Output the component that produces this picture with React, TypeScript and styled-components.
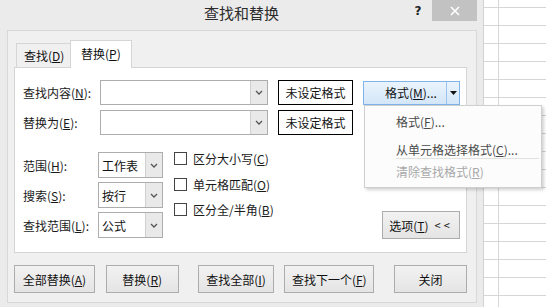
import styled, { createGlobalStyle } from "styled-components";

const GlobalStyle = createGlobalStyle`
  html, body {
    margin: 0;
    padding: 0;
  }
  body {
    font-family: "Noto Sans CJK SC", "Noto Sans", sans-serif;
    font-size: 12px;
    color: #000;
    background: #fff;
  }
`;

const Page = styled.div`
  display: flex;
  width: 546px;
  height: 307px;
  overflow: hidden;
`;

// excel sheet behind the dialog
const Sheet = styled.div`
  flex: 1;
  background-color: #fff;
  background-image: linear-gradient(
      to right,
      transparent 14px,
      #d6d6d6 14px,
      #d6d6d6 15px,
      transparent 15px
    ),
    repeating-linear-gradient(
      to bottom,
      transparent 0 7px,
      #d6d6d6 7px 8px,
      transparent 8px 18px
    );
`;

const Dialog = styled.div`
  flex: none;
  width: 483px;
  background: #ebebeb;
  border-right: 1px solid #d2d2d2;
  display: flex;
  flex-direction: column;
`;

const TitleBar = styled.div`
  height: 30px;
  display: grid;
  grid-template-columns: 1fr auto 1fr;
  align-items: start;
`;

const Title = styled.div`
  grid-column: 2;
  font-size: 15px;
  line-height: 26px;
  color: #2b2b2b;
`;

const Controls = styled.div`
  grid-column: 3;
  justify-self: end;
  display: flex;
  margin-right: 6px;
`;

const HelpButton = styled.div`
  width: 28px;
  height: 21px;
  display: flex;
  align-items: center;
  justify-content: center;
  font-family: "DejaVu Sans", sans-serif;
  font-weight: bold;
  font-size: 12px;
  color: #222;
`;

const CloseButton = styled.div`
  width: 45px;
  height: 21px;
  background: #c2c2c2;
  display: flex;
  align-items: center;
  justify-content: center;
`;

const Frame = styled.div`
  box-sizing: border-box;
  margin-left: 7px;
  width: 470px;
  background: #f0f0f0;
  border: 1px solid #d8d8d8;
  padding: 9px 9px 9px 6px;
`;

const TabStrip = styled.div`
  display: flex;
  align-items: flex-end;
  height: 28px;
  margin-left: 2px;
  margin-bottom: -1px;
  position: relative;
  z-index: 1;
`;

const Tab = styled.div<{ $active?: boolean }>`
  box-sizing: border-box;
  height: ${(p) => (p.$active ? 28 : 25)}px;
  width: ${(p) => (p.$active ? 62 : 55)}px;
  margin-left: ${(p) => (p.$active ? -1 : 0)}px;
  border: 1px solid #d5d5d5;
  border-bottom: ${(p) => (p.$active ? "none" : "1px solid #d5d5d5")};
  background: ${(p) => (p.$active ? "#fff" : "#f0f0f0")};
  padding-left: ${(p) => (p.$active ? 10 : 7)}px;
  line-height: ${(p) => (p.$active ? 25 : 24)}px;
  color: #111;
`;

const Panel = styled.div`
  box-sizing: border-box;
  height: 186px;
  background: #fff;
  border: 1px solid #d5d5d5;
  padding: 12px 0 0 8px;
  display: flex;
  flex-direction: column;
`;

const U = styled.span`
  text-decoration: underline;
  text-underline-offset: 1px;
`;

const FindRow = styled.div<{ $gap?: number }>`
  display: flex;
  align-items: center;
  height: 25px;
  margin-top: ${(p) => p.$gap ?? 0}px;
`;

const Label = styled.div<{ $w: number }>`
  width: ${(p) => p.$w}px;
  flex: none;
  color: #1a1a1a;
  white-space: nowrap;
`;

const Combo = styled.div<{ $w: number; $h?: number }>`
  box-sizing: border-box;
  width: ${(p) => p.$w}px;
  height: ${(p) => p.$h ?? 25}px;
  border: 1px solid #adadad;
  background: #fff;
  display: flex;
`;

const ComboText = styled.div`
  flex: 1;
  padding-left: 3px;
  display: flex;
  align-items: center;
  color: #111;
`;

const ComboButton = styled.div`
  width: 16px;
  flex: none;
  background: #e9e9e9;
  border-left: 1px solid #d0d0d0;
  display: flex;
  align-items: center;
  justify-content: center;
`;

const Chevron = () => (
  <svg width="8" height="5" viewBox="0 0 8 5">
    <path d="M1 1 L4 4 L7 1" fill="none" stroke="#555" strokeWidth="1.3" />
  </svg>
);

const Preview = styled.div`
  box-sizing: border-box;
  width: 75px;
  height: 25px;
  margin-left: 10px;
  border: 1px solid #000;
  display: flex;
  align-items: center;
  justify-content: center;
  color: #111;
`;

const FormatWrap = styled.div`
  position: relative;
  margin-left: 10px;
`;

const FormatButton = styled.div`
  box-sizing: border-box;
  width: 97px;
  height: 24px;
  border: 1px solid #7eb4ea;
  background: linear-gradient(#ebf4fd, #d3e6f8);
  display: flex;
`;

const FormatMain = styled.div`
  width: 83px;
  padding-left: 21px;
  box-sizing: border-box;
  display: flex;
  align-items: center;
  border-right: 1px solid #9cc4ec;
  color: #111;
`;

const FormatArrow = styled.div`
  flex: 1;
  display: flex;
  align-items: center;
  justify-content: center;
`;

const Menu = styled.div`
  position: absolute;
  top: 100%;
  left: 1px;
  z-index: 10;
  box-sizing: border-box;
  width: 178px;
  background: #fcfcfc;
  border: 1px solid #cfcfcf;
  box-shadow: 2px 2px 3px rgba(0, 0, 0, 0.18);
  padding: 5px 0 4px;
  display: flex;
  flex-direction: column;
`;

const MenuItem = styled.div<{ $disabled?: boolean; $mt?: number }>`
  height: 22px;
  line-height: 22px;
  padding-left: 31px;
  margin-top: ${(p) => p.$mt ?? 0}px;
  color: ${(p) => (p.$disabled ? "#a8a8a8" : "#4a4a4a")};
  white-space: nowrap;
`;

const MenuSeparator = styled.div`
  height: 1px;
  margin: -3px 2px 2px 31px;
  background: #e2e2e2;
`;

const OptionsArea = styled.div`
  display: flex;
  margin-top: 17px;
  height: 88px;
`;

const SelectGrid = styled.div`
  display: grid;
  grid-template-columns: 75px 65px;
  grid-auto-rows: 26px;
  row-gap: 4px;
  align-items: center;
`;

const CheckList = styled.div`
  margin-left: 11px;
  margin-top: -6px;
  display: flex;
  flex-direction: column;
`;

const CheckRow = styled.div`
  height: 25.5px;
  display: flex;
  align-items: center;
  color: #1a1a1a;
  white-space: nowrap;
`;

const CheckBox = styled.div`
  box-sizing: border-box;
  width: 13px;
  height: 13px;
  border: 1px solid #444;
  background: #fff;
  margin-right: 6px;
`;

const Button = styled.div<{ $w: number; $ml?: number }>`
  box-sizing: border-box;
  width: ${(p) => p.$w}px;
  height: 28px;
  margin-left: ${(p) => p.$ml ?? 0}px;
  border: 1px solid #acacac;
  background: linear-gradient(#f2f2f2, #e4e4e4);
  display: flex;
  align-items: center;
  justify-content: center;
  color: #111;
  white-space: nowrap;
`;

const OptionsButton = styled(Button)`
  margin-left: auto;
  margin-right: 6px;
  align-self: flex-end;
  margin-bottom: 1px;
`;

const ButtonRow = styled.div`
  display: flex;
  margin-top: 12px;
`;

const Arrows = styled.span`
  margin-left: 6px;
  font-size: 11px;
  letter-spacing: 3px;
`;

export default function App() {
  return (
    <>
      <GlobalStyle />
      <Page>
        <Dialog>
          <TitleBar>
            <Title>查找和替换</Title>
            <Controls>
              <HelpButton>?</HelpButton>
              <CloseButton>
                <svg width="10" height="10" viewBox="0 0 10 10">
                  <path
                    d="M1 1 L9 9 M9 1 L1 9"
                    stroke="#fff"
                    strokeWidth="1.6"
                  />
                </svg>
              </CloseButton>
            </Controls>
          </TitleBar>

          <Frame>
            <TabStrip>
              <Tab>
                查找(<U>D</U>)
              </Tab>
              <Tab $active>
                替换(<U>P</U>)
              </Tab>
            </TabStrip>

            <Panel>
              <FindRow>
                <Label $w={77}>
                  查找内容(<U>N</U>):
                </Label>
                <Combo $w={168}>
                  <ComboText />
                  <ComboButton>
                    <Chevron />
                  </ComboButton>
                </Combo>
                <Preview>未设定格式</Preview>
                <FormatWrap>
                  <FormatButton>
                    <FormatMain>
                      格式(<U>M</U>)...
                    </FormatMain>
                    <FormatArrow>
                      <svg width="7" height="4" viewBox="0 0 7 4">
                        <path d="M0 0 L7 0 L3.5 4 Z" fill="#111" />
                      </svg>
                    </FormatArrow>
                  </FormatButton>
                  <Menu>
                    <MenuItem>
                      格式(<U>F</U>)...
                    </MenuItem>
                    <MenuItem $mt={6}>
                      从单元格选择格式(<U>C</U>)...
                    </MenuItem>
                    <MenuSeparator />
                    <MenuItem $disabled>
                      清除查找格式(<U>R</U>)
                    </MenuItem>
                  </Menu>
                </FormatWrap>
              </FindRow>

              <FindRow $gap={5}>
                <Label $w={77}>
                  替换为(<U>E</U>):
                </Label>
                <Combo $w={168}>
                  <ComboText />
                  <ComboButton>
                    <Chevron />
                  </ComboButton>
                </Combo>
                <Preview>未设定格式</Preview>
              </FindRow>

              <OptionsArea>
                <SelectGrid>
                  <Label $w={75}>
                    范围(<U>H</U>):
                  </Label>
                  <Combo $w={65} $h={26}>
                    <ComboText>工作表</ComboText>
                    <ComboButton>
                      <Chevron />
                    </ComboButton>
                  </Combo>
                  <Label $w={75}>
                    搜索(<U>S</U>):
                  </Label>
                  <Combo $w={65} $h={26}>
                    <ComboText>按行</ComboText>
                    <ComboButton>
                      <Chevron />
                    </ComboButton>
                  </Combo>
                  <Label $w={75}>
                    查找范围(<U>L</U>):
                  </Label>
                  <Combo $w={65} $h={26}>
                    <ComboText>公式</ComboText>
                    <ComboButton>
                      <Chevron />
                    </ComboButton>
                  </Combo>
                </SelectGrid>

                <CheckList>
                  <CheckRow>
                    <CheckBox />
                    区分大小写(<U>C</U>)
                  </CheckRow>
                  <CheckRow>
                    <CheckBox />
                    单元格匹配(<U>O</U>)
                  </CheckRow>
                  <CheckRow>
                    <CheckBox />
                    区分全/半角(<U>B</U>)
                  </CheckRow>
                </CheckList>

                <OptionsButton $w={78}>
                  选项(<U>T</U>)<Arrows>&lt;&lt;</Arrows>
                </OptionsButton>
              </OptionsArea>
            </Panel>

            <ButtonRow>
              <Button $w={81}>
                全部替换(<U>A</U>)
              </Button>
              <Button $w={73} $ml={11}>
                替换(<U>R</U>)
              </Button>
              <Button $w={77} $ml={19}>
                查找全部(<U>I</U>)
              </Button>
              <Button $w={90} $ml={10}>
                查找下一个(<U>F</U>)
              </Button>
              <Button $w={73} $ml={20}>
                关闭
              </Button>
            </ButtonRow>
          </Frame>
        </Dialog>
        <Sheet />
      </Page>
    </>
  );
}
